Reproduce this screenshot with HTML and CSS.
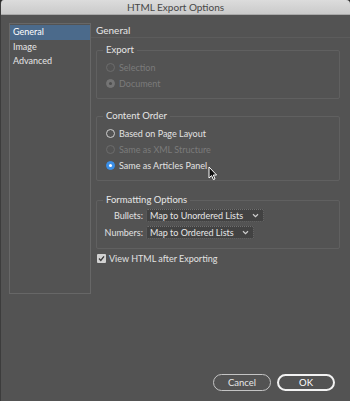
FILE: index.html
```html
<!DOCTYPE html>
<html lang="en">
<head>
    <meta charset="UTF-8">
    <title>HTML Export Options</title>
    <link rel="stylesheet" href="styles.css">
</head>
<body>

    <div class="dialog">
        <div class="title-bar">HTML Export Options</div>

        <div class="dialog-body">
            <ul class="side-list">
                <li class="active">General</li>
                <li>Image</li>
                <li>Advanced</li>
            </ul>

            <div class="pane">
                <div class="pane-title">General</div>

                <fieldset class="group export">
                    <legend>Export</legend>
                    <div class="radio-row disabled"><span class="radio"></span>Selection</div>
                    <div class="radio-row disabled"><span class="radio checked"></span>Document</div>
                </fieldset>

                <fieldset class="group order">
                    <legend>Content Order</legend>
                    <div class="radio-row"><span class="radio"></span>Based on Page Layout</div>
                    <div class="radio-row disabled"><span class="radio"></span>Same as XML Structure</div>
                    <div class="radio-row"><span class="radio checked"></span>Same as Articles Panel</div>
                </fieldset>

                <fieldset class="group formatting">
                    <legend>Formatting Options</legend>
                    <div class="field-grid">
                        <label>Bullets:</label>
                        <div class="select wide">Map to Unordered Lists
                            <svg class="chevron" width="7" height="5" viewBox="0 0 7 5"><path d="M1 1.2 L3.5 3.6 L6 1.2" fill="none" stroke="#cfcfcf" stroke-width="1.2"/></svg>
                        </div>
                        <label>Numbers:</label>
                        <div class="select">Map to Ordered Lists
                            <svg class="chevron" width="7" height="5" viewBox="0 0 7 5"><path d="M1 1.2 L3.5 3.6 L6 1.2" fill="none" stroke="#cfcfcf" stroke-width="1.2"/></svg>
                        </div>
                    </div>
                </fieldset>

                <div class="check-row">
                    <span class="checkbox">
                        <svg width="9" height="9" viewBox="0 0 9 9"><path d="M2 4.6 L3.8 6.4 L7 2.4" fill="none" stroke="#3a3a3a" stroke-width="1.4"/></svg>
                    </span>
                    View HTML after Exporting
                </div>
            </div>
        </div>

        <div class="footer">
            <button class="btn">Cancel</button>
            <button class="btn primary">OK</button>
        </div>

        <!-- mouse pointer from the capture -->
        <svg class="pointer" width="10" height="15" viewBox="0 0 10 15">
            <path d="M1 1 L1 12 L3.6 9.6 L5.4 13.6 L7 12.9 L5.3 9 L8.6 9 Z" fill="#111" stroke="#fff" stroke-width="1"/>
        </svg>
    </div>

</body>
</html>
```

FILE: styles.css
```css
/* Basic reset */
* {
    margin: 0;
    padding: 0;
    box-sizing: border-box;
}

body {
    width: 350px;
    height: 401px;
    background: #2b2b2b;
    font-family: 'Lato', 'Liberation Sans', sans-serif;
    font-size: 9px;
    color: #e2e2e2;
    overflow: hidden;
}

/* Dialog window */
.dialog {
    position: relative;
    display: flex;
    flex-direction: column;
    width: 350px;
    height: 401px;
    background: #535353;
    border-left: 1px solid #3c3c3c;
    border-radius: 4px 4px 0 0;
    overflow: hidden;
}

.title-bar {
    height: 15px;
    line-height: 14px;
    text-align: center;
    font-size: 10px;
    color: #474747;
    background: linear-gradient(#dcdcdc, #cacaca);
    border-bottom: 1px solid #a9a9a9;
}

.dialog-body {
    display: flex;
}

/* Left list */
.side-list {
    list-style: none;
    width: 82px;
    height: 271px;
    margin: 8px 0 0 8px;
    padding-top: 1px;
    border: 1px solid #676767;
}

.side-list li {
    height: 14px;
    line-height: 14px;
    padding-left: 3px;
    color: #e6e6e6;
}

.side-list li.active {
    background: #4b6a8b;
    height: 15px;
    color: #fff;
}

/* Right pane */
.pane {
    flex-grow: 1;
    padding-top: 9px;
}

.pane-title {
    height: 14px;
    line-height: 13px;
    padding-left: 5px;
    font-size: 10px;
    color: #e8e8e8;
    border-bottom: 1px solid #5c5c5c;
}

/* Group boxes */
.group {
    margin: 13px 10px 0 5px;
    padding: 3px 0 7px 9px;
    border: 1px solid #606060;
    border-radius: 2px;
}

.group.export {
    margin-top: 6px;
}

.group.order {
    margin-top: 11px;
}

.group legend {
    margin-left: -3px;
    padding: 0 3px;
    height: 12px;
    line-height: 12px;
    font-size: 9.5px;
    color: #e6e6e6;
}

.radio-row {
    display: flex;
    align-items: center;
    height: 16px;
    color: #e2e2e2;
}

.radio-row.disabled {
    color: #7b7b7b;
}

.radio {
    position: relative;
    width: 9px;
    height: 9px;
    margin-right: 4px;
    border: 1px solid #cfcfcf;
    border-radius: 50%;
}

.radio-row.disabled .radio {
    border-color: #6c6c6c;
}

.radio.checked {
    background: #3a8ee6;
    border-color: #3a8ee6;
}

.radio.checked::after {
    content: "";
    position: absolute;
    left: 2px;
    top: 2px;
    width: 3px;
    height: 3px;
    border-radius: 50%;
    background: #fff;
}

.radio-row.disabled .radio.checked {
    background: #747474;
    border-color: #747474;
}

.radio-row.disabled .radio.checked::after {
    background: #4e4e4e;
}

/* Formatting options */
.formatting {
    padding-bottom: 9px;
}

.field-grid {
    display: grid;
    grid-template-columns: 37px auto;
    column-gap: 3px;
    row-gap: 4px;
    align-items: center;
    justify-items: start;
}

.field-grid label {
    justify-self: end;
    color: #e2e2e2;
}

.select {
    display: flex;
    align-items: center;
    justify-content: space-between;
    width: 108px;
    height: 13px;
    padding: 0 4px 0 3px;
    background: #424242;
    border: 1px dotted #6f6f6f;
    border-radius: 2px;
    color: #e6e6e6;
}

.select.wide {
    width: 118px;
}

/* Checkbox */
.check-row {
    display: flex;
    align-items: center;
    height: 12px;
    margin: 3px 0 0 6px;
}

.checkbox {
    display: flex;
    width: 9px;
    height: 9px;
    margin-right: 3px;
    background: #d2d2d2;
    border-radius: 1px;
}

/* Footer buttons */
.footer {
    display: flex;
    justify-content: flex-end;
    gap: 6px;
    margin-top: auto;
    padding: 0 15px 10px 0;
}

.btn {
    width: 58px;
    height: 17px;
    font-family: 'Lato', 'Liberation Sans', sans-serif;
    font-size: 9.5px;
    color: #e6e6e6;
    background: transparent;
    border: 1px solid #c4c4c4;
    border-radius: 9px;
}

.btn.primary {
    border: 2px solid #f2f2f2;
    color: #fff;
}

.pointer {
    position: absolute;
    left: 207px;
    top: 166px;
}
```
